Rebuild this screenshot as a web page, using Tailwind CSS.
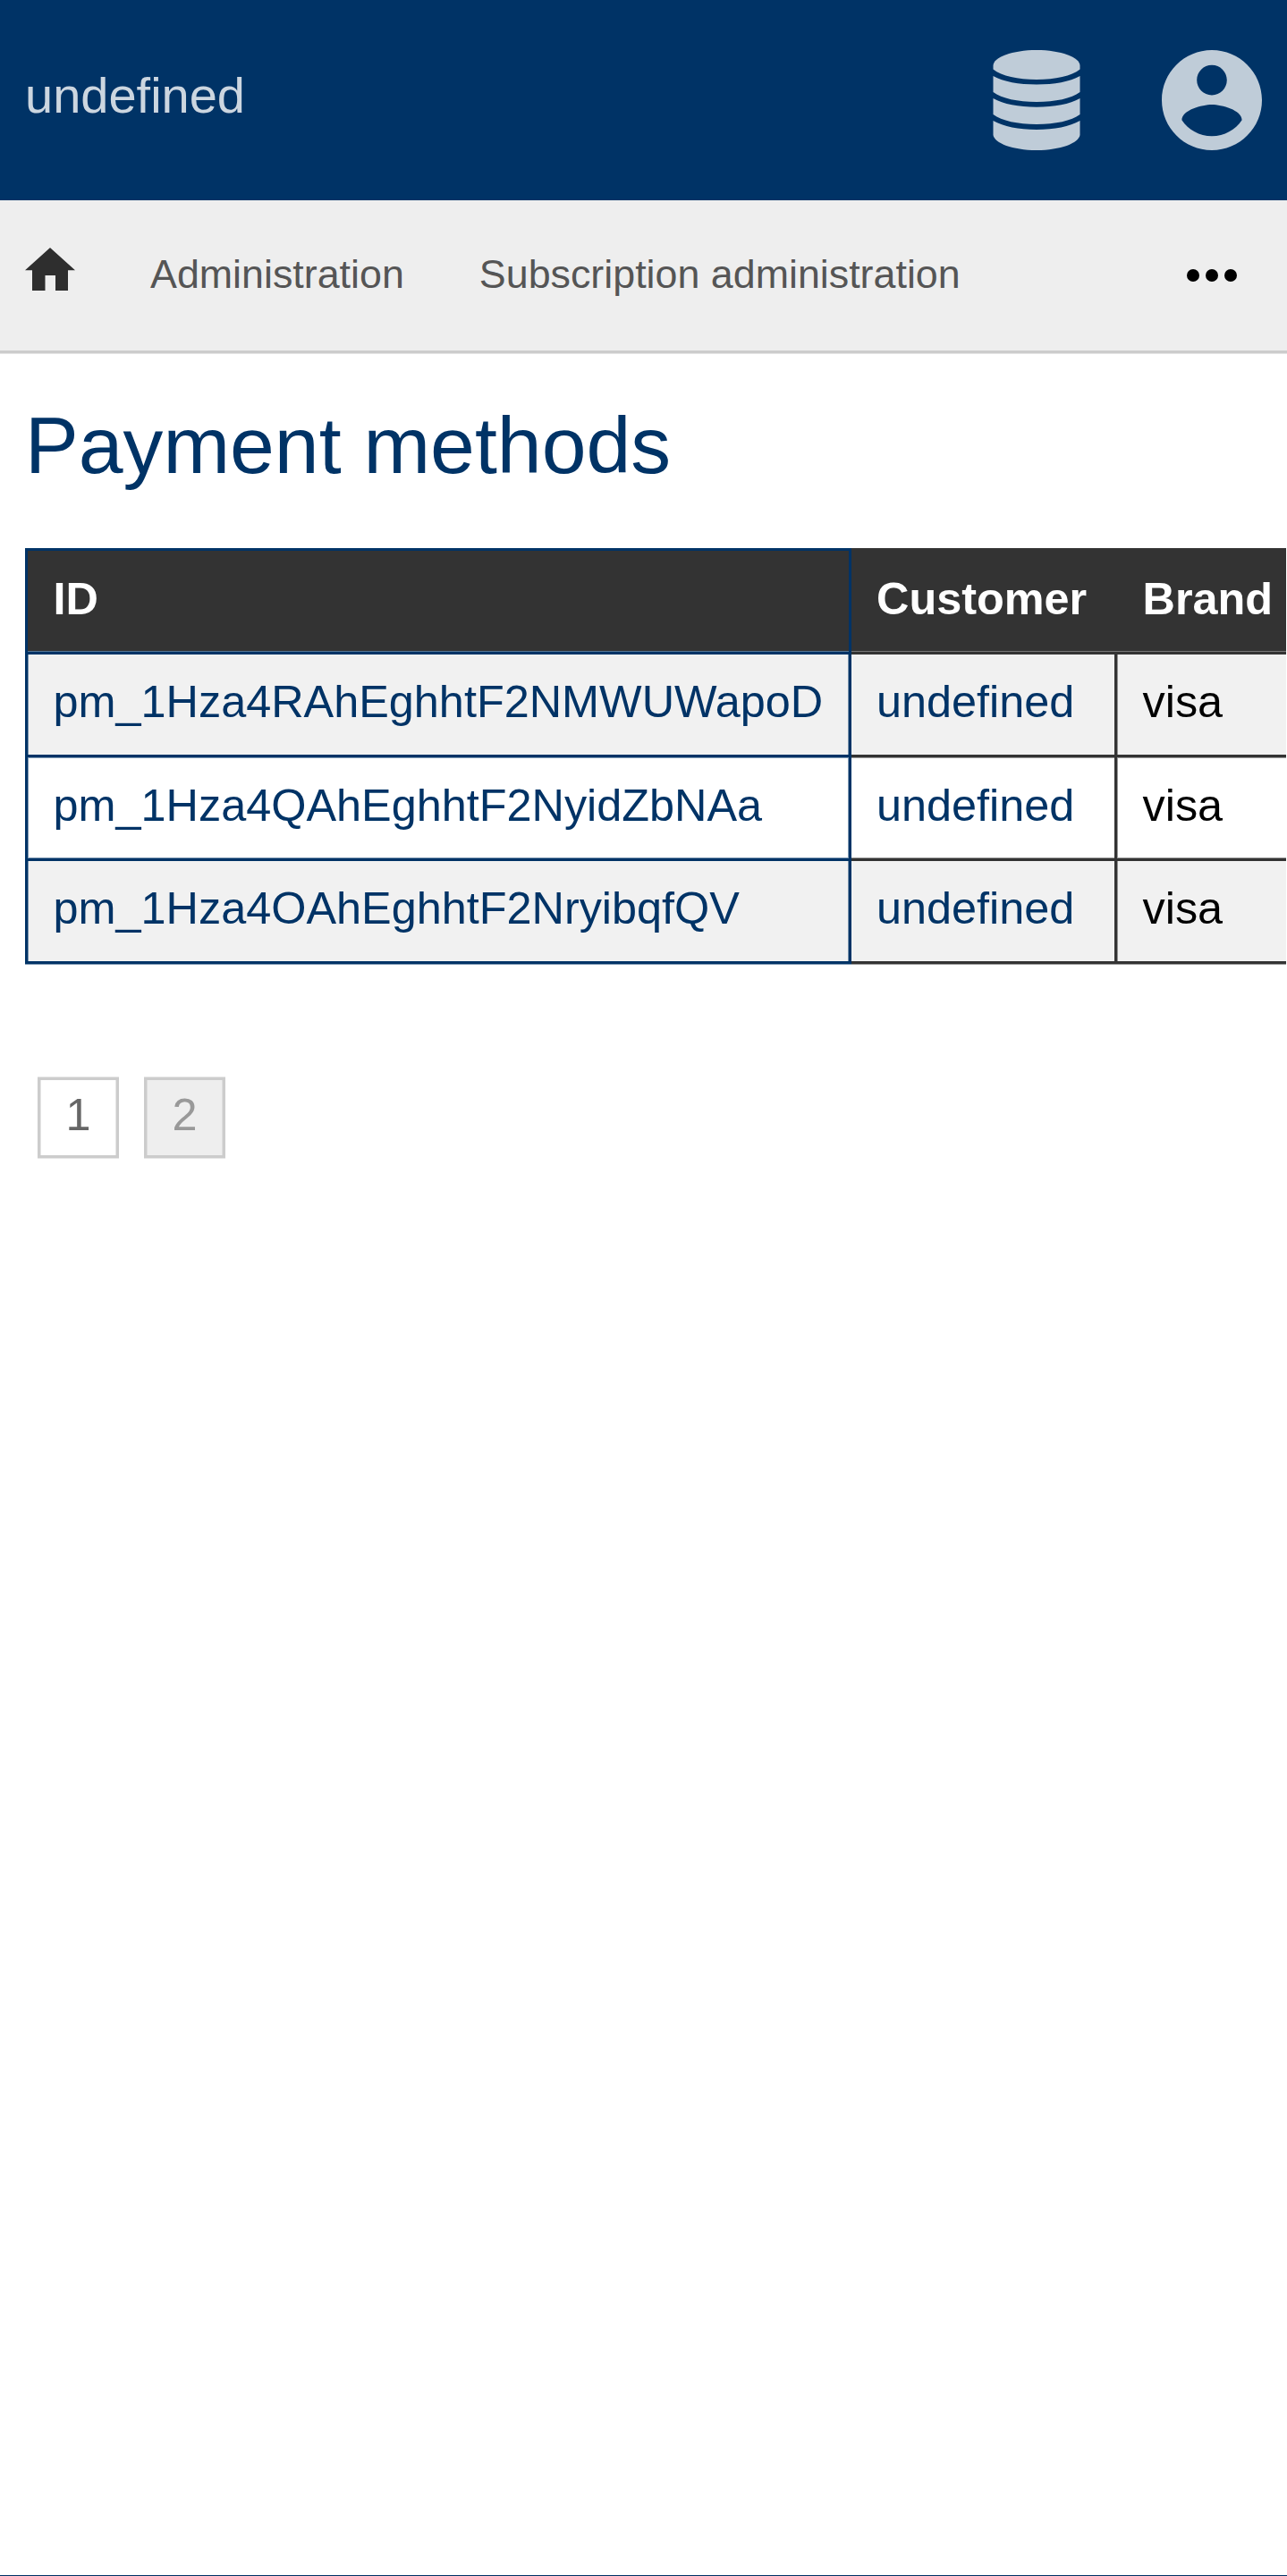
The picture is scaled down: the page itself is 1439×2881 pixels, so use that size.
<!DOCTYPE html>
<html lang="en">
<head>
<meta charset="utf-8">
<title>Payment methods</title>
<script src="https://cdn.jsdelivr.net/npm/@tailwindcss/browser@4"></script>
</head>
<body class="h-[2881px] w-[1439px] overflow-hidden bg-white font-['Liberation_Sans',sans-serif] flex flex-col border-b border-[#003366]">
<header class="h-56 shrink-0 bg-[#003366] flex items-start justify-between pl-7 pr-[28.5px] pt-14">
  <a class="text-[56px] leading-[63px] mt-[19px] text-[#ccd6e0]">undefined</a>
  <div class="flex gap-[91px]">
    <svg class="w-[98px] h-28" viewBox="0 0 98 112" fill="#bfccd8">
      <path d="M0.5 17.500C0.500 8 22 0 49 0S97.500 8 97.500 17.500V21.500C88 29 70 33 49 33S10 29 0.500 21.500Z"/>
      <path d="M0.500 29C12 35.500 29 38.500 49 38.500S86 35.500 97.500 29V47C88 54 70 58 49 58S10 54 0.500 47Z"/>
      <path d="M0.500 54C12 60.500 29 63.700 49 63.700S86 60.500 97.500 54V72C88 79 70 83 49 83S10 79 0.500 72Z"/>
      <path d="M0.500 79C12 85.500 29 88.900 49 88.900S86 85.500 97.500 79V95C96 104 76 112 49 112S2 104 0.500 95Z"/>
    </svg>
    <svg class="w-28 h-28" viewBox="0 0 20 20" fill="#bfccd8">
      <path fill-rule="evenodd" d="M10 0C4.480 0 0 4.480 0 10s4.480 10 10 10 10-4.480 10-10S15.520 0 10 0zm0 3c1.660 0 3 1.340 3 3s-1.340 3-3 3-3-1.340-3-3 1.340-3 3-3zm0 14.200c-2.500 0-4.710-1.280-6-3.220.030-1.990 4-3.080 6-3.080 1.990 0 5.970 1.090 6 3.080-1.290 1.940-3.500 3.220-6 3.220z"/>
    </svg>
  </div>
</header>
<nav class="h-[171px] shrink-0 bg-[#eeeeee] border-b-[3px] border-[#cccccc] flex items-start pl-7 pr-[56.5px] text-[44.8px] leading-[51px] text-[#555555] shadow-[0_1px_0_#e5e5e5]">
  <svg class="w-14 h-12 mt-[53px]" viewBox="0 0 56 48" fill="#2e2e2e"><path d="M0 25.200 28 0 56 25.200H48V48H34V31H22.500V48H8V25.200Z"/></svg>
  <a class="ml-[84px] mt-[57px]">Administration</a>
  <a class="ml-[84px] mt-[57px]">Subscription administration</a>
  <svg class="w-14 h-3.5 ml-auto mt-[77px] text-black" viewBox="0 0 56 14" fill="currentColor"><circle cx="7" cy="7" r="7"/><circle cx="28" cy="7" r="7"/><circle cx="49" cy="7" r="7"/></svg>
</nav>
<main class="pl-7">
  <h1 class="mt-[53px] text-[89.6px] leading-[100px] text-[#003366]">Payment methods</h1>
  <div class="mt-[65px] h-[465px] w-[1410px] grid grid-cols-[924px_297px_189px] grid-rows-[119px_115px_116px_115px] overflow-hidden text-[50.4px] leading-[57px] text-[#003366]">
    <div class="pt-[25px] bg-[#333333] border-[3px] border-[#003366] pl-[28.5px] font-bold text-white shadow-[inset_0_-1px_0_#587694]">ID</div>
    <div class="pt-[25px] bg-[#333333] border-y-[3px] border-[#333333] pl-7 font-bold text-white shadow-[inset_0_-1px_0_#777777]">Customer</div>
    <div class="pt-[25px] bg-[#333333] border-y-[3px] border-[#333333] pl-[28.5px] font-bold text-white shadow-[inset_0_-1px_0_#777777]">Brand</div>

    <div class="pt-6 bg-[#f1f1f1] border-x-[3px] border-b-[3px] border-[#003366] pl-[28.5px] shadow-[inset_1px_0_0_#7892ac,inset_-1px_0_0_#7892ac]">pm_1Hza4RAhEghhtF2NMWUWapoD</div>
    <div class="pt-6 bg-[#f1f1f1] border-r-[3px] border-b-[3px] border-[#333333] pl-7">undefined</div>
    <div class="pt-6 bg-[#f1f1f1] border-b-[3px] border-[#333333] pl-[28.5px] text-black shadow-[inset_1px_0_0_#929292]">visa</div>

    <div class="pt-[25px] border-x-[3px] border-b-[3px] border-[#003366] pl-[28.5px] shadow-[inset_1px_0_0_#7f98b2,inset_-1px_0_0_#7f98b2,inset_0_1px_0_#7f98b2,inset_0_-1px_0_#7f98b2]">pm_1Hza4QAhEghhtF2NyidZbNAa</div>
    <div class="pt-[25px] border-r-[3px] border-b-[3px] border-[#333333] pl-7 shadow-[inset_0_1px_0_#999999,inset_0_-1px_0_#999999]">undefined</div>
    <div class="pt-[25px] border-b-[3px] border-[#333333] pl-[28.5px] text-black shadow-[inset_1px_0_0_#999999,inset_0_1px_0_#999999,inset_0_-1px_0_#999999]">visa</div>

    <div class="pt-6 bg-[#f1f1f1] border-x-[3px] border-b-[3px] border-[#003366] pl-[28.5px] shadow-[inset_1px_0_0_#7892ac,inset_-1px_0_0_#7892ac]">pm_1Hza4OAhEghhtF2NryibqfQV</div>
    <div class="pt-6 bg-[#f1f1f1] border-r-[3px] border-b-[3px] border-[#333333] pl-7">undefined</div>
    <div class="pt-6 bg-[#f1f1f1] border-b-[3px] border-[#333333] pl-[28.5px] text-black shadow-[inset_1px_0_0_#929292]">visa</div>
  </div>
  <div class="h-px w-[1410px] flex"><div class="w-[924px] bg-[#7f98b2]"></div><div class="flex-1 bg-[#999999]"></div></div>
  <div class="mt-[126px] ml-3.5 flex gap-7 text-[50.4px] leading-[57px] text-center">
    <a class="w-[91px] h-[90px] border-[3px] border-[#cccccc] pt-2.5 text-[#666666] shadow-[0_-1px_0_#e5e5e5,0_1px_0_#e5e5e5,inset_1px_0_0_#e5e5e5,inset_-1px_0_0_#e5e5e5]">1</a>
    <a class="w-[91px] h-[90px] border-[3px] border-[#cccccc] bg-[#eeeeee] pt-2.5 text-[#999999] shadow-[0_-1px_0_#e5e5e5,0_1px_0_#e5e5e5,inset_1px_0_0_#dddddd,inset_-1px_0_0_#dddddd]">2</a>
  </div>
</main>
</body>
</html>
